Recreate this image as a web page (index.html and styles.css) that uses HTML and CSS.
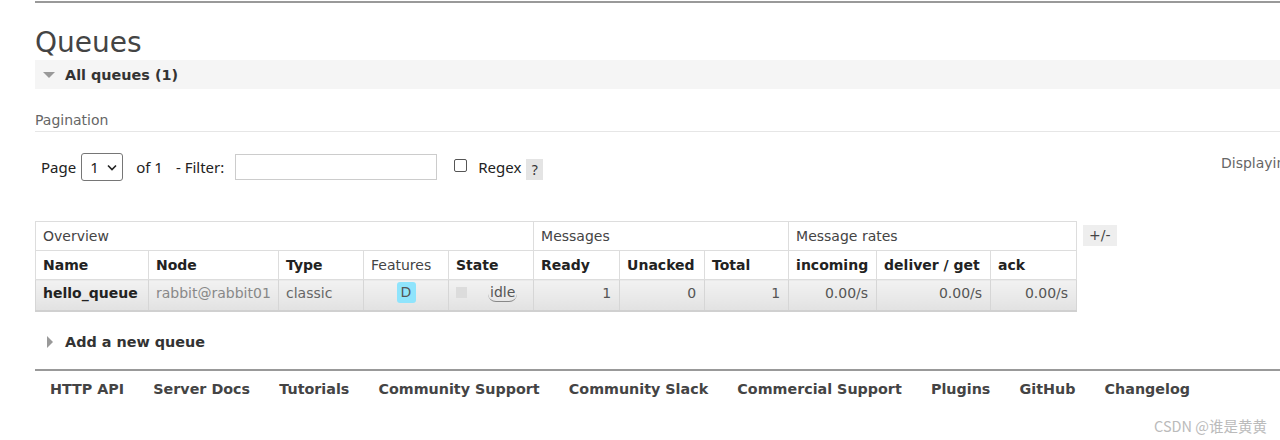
FILE: index.html
```html
<!DOCTYPE html>
<html lang="en">
<head>
    <meta charset="UTF-8">
    <title>RabbitMQ Management - Queues</title>
    <link rel="stylesheet" href="styles.css">
</head>
<body>
    <div class="main">
        <div class="top-rule"></div>
        <h1>Queues</h1>
        <div class="section-head">
            <span class="arrow-down"></span>
            <h2>All queues (1)</h2>
        </div>

        <div class="pagination-label">Pagination</div>
        <div class="pager">
            <div class="pager-left">
                <span>Page</span>
                <span class="select">1 <svg width="10" height="7" viewBox="0 0 10 7"><path d="M1 1.5 L5 5.5 L9 1.5" fill="none" stroke="#222" stroke-width="1.6"/></svg></span>
                <span class="of">of 1</span>
                <span>- Filter:</span>
                <span class="filter"></span>
                <span class="checkbox"></span>
                <span>Regex</span>
                <span class="help">?</span>
            </div>
            <div class="pager-right">Displaying 1 item , page size up to: <span class="page-size">100</span></div>
        </div>

        <div class="table-row">
            <table class="list">
                <colgroup>
                    <col class="c-name"><col class="c-node"><col class="c-type"><col class="c-feat"><col class="c-state">
                    <col class="c-ready"><col class="c-unacked"><col class="c-total">
                    <col class="c-in"><col class="c-deliver"><col class="c-ack">
                </colgroup>
                <thead>
                    <tr class="group">
                        <th colspan="5">Overview</th>
                        <th colspan="3">Messages</th>
                        <th colspan="3">Message rates</th>
                    </tr>
                    <tr class="cols">
                        <th>Name</th>
                        <th>Node</th>
                        <th>Type</th>
                        <th class="plain">Features</th>
                        <th>State</th>
                        <th>Ready</th>
                        <th>Unacked</th>
                        <th>Total</th>
                        <th>incoming</th>
                        <th>deliver / get</th>
                        <th>ack</th>
                    </tr>
                </thead>
                <tbody>
                    <tr>
                        <td class="qname">hello_queue</td>
                        <td class="node">rabbit@rabbit01</td>
                        <td class="qtype">classic</td>
                        <td class="center"><span class="badge">D</span></td>
                        <td><span class="state"><span class="dot"></span><span class="idle">idle</span></span></td>
                        <td class="num">1</td>
                        <td class="num">0</td>
                        <td class="num">1</td>
                        <td class="num">0.00/s</td>
                        <td class="num">0.00/s</td>
                        <td class="num">0.00/s</td>
                    </tr>
                </tbody>
            </table>
            <span class="toggle">+/-</span>
        </div>

        <div class="section-closed">
            <span class="arrow-right"></span>
            <h2>Add a new queue</h2>
        </div>

        <div class="footer">
            <a href="#">HTTP API</a>
            <a href="#">Server Docs</a>
            <a href="#">Tutorials</a>
            <a href="#">Community Support</a>
            <a href="#">Community Slack</a>
            <a href="#">Commercial Support</a>
            <a href="#">Plugins</a>
            <a href="#">GitHub</a>
            <a href="#">Changelog</a>
        </div>
    </div>
    <div class="watermark">CSDN @谁是黄黄</div>
</body>
</html>
```

FILE: styles.css
```css
* {
    box-sizing: border-box;
    margin: 0;
    padding: 0;
}

body {
    font-family: "DejaVu Sans", Verdana, sans-serif;
    font-size: 14px;
    color: #444;
    background: #fff;
    overflow: hidden;
    width: 1280px;
    height: 440px;
}

.main {
    padding-left: 35px;
}

.top-rule {
    border-top: 2px solid #999;
    margin-top: 1px;
}

h1 {
    font-size: 28px;
    font-weight: normal;
    line-height: 34px;
    margin-top: 23px;
    color: #444;
}

.section-head {
    display: flex;
    align-items: center;
    height: 29px;
    background: #f5f5f5;
}

h2 {
    font-size: 14.4px;
    font-weight: bold;
    color: #333;
}

.arrow-down {
    width: 0;
    height: 0;
    border-left: 6px solid transparent;
    border-right: 6px solid transparent;
    border-top: 6px solid #999;
    margin: 0 10px 0 8px;
}

.pagination-label {
    margin-top: 23px;
    color: #666;
    line-height: 16px;
    padding-bottom: 3px;
    border-bottom: 1px solid #e6e6e6;
}

.pager {
    display: grid;
    grid-template-columns: 1186px auto;
    align-items: center;
    height: 28px;
    margin-top: 21px;
    white-space: nowrap;
    font-family: "Noto Sans", "Open Sans", sans-serif;
    font-size: 15px;
    color: #222;
}

.pager-left {
    display: flex;
    align-items: center;
    padding-left: 6px;
}

.select {
    display: inline-flex;
    align-items: center;
    gap: 8px;
    width: 42px;
    height: 28px;
    margin-left: 5px;
    padding-left: 8px;
    border: 1px solid #767676;
    border-radius: 3px;
    font-size: 15px;
}

.of {
    margin-left: 13px;
    margin-right: 13px;
}

.filter {
    width: 202px;
    height: 26px;
    margin-left: 11px;
    border: 1px solid #ccc;
}

.checkbox {
    width: 13px;
    height: 13px;
    margin-left: 17px;
    margin-right: 11px;
    margin-top: -4px;
    border: 1px solid #555;
    border-radius: 2px;
}

.help {
    margin-left: 5px;
    margin-top: 4px;
    width: 17px;
    height: 21px;
    background: #e4e4e4;
    text-align: center;
    line-height: 21px;
    color: #333;
    font-size: 14px;
}

.pager-right {
    color: #666;
    margin-top: -8px;
    font-family: "DejaVu Sans", Verdana, sans-serif;
    font-size: 14px;
}

.table-row {
    display: flex;
    align-items: flex-start;
    margin-top: 40px;
}

table.list {
    border-collapse: collapse;
    table-layout: fixed;
    width: 1041px;
}

.c-name { width: 113px; }
.c-node { width: 130px; }
.c-type { width: 85px; }
.c-feat { width: 85px; }
.c-state { width: 85px; }
.c-ready { width: 86px; }
.c-unacked { width: 85px; }
.c-total { width: 84px; }
.c-in { width: 88px; }
.c-deliver { width: 114px; }
.c-ack { width: 86px; }

table.list th,
table.list td {
    border: 1px solid #ddd;
    padding: 0 7px;
    text-align: left;
    white-space: nowrap;
    overflow: hidden;
}

table.list tr.group th {
    height: 29px;
    font-weight: normal;
    color: #444;
}

table.list tr.cols th {
    height: 29px;
    font-weight: bold;
    color: #222;
}

table.list tr.cols th.plain {
    font-weight: normal;
    color: #444;
}

table.list tbody td {
    height: 31px;
    padding-bottom: 4px;
    background: linear-gradient(#f2f2f2, #e2e2e2);
    border-color: #d6d6d6;
    border-bottom: 2px solid #d0d0d0;
    color: #555;
}

table.list td.qname {
    font-weight: bold;
    color: #222;
}

table.list td.node {
    color: #888;
}

table.list td.qtype {
    color: #666;
}

table.list td.center {
    text-align: center;
}

table.list td.num {
    text-align: right;
    padding-right: 8px;
}

.badge {
    display: inline-block;
    width: 19px;
    height: 21px;
    line-height: 21px;
    text-align: center;
    background: #8fe4fc;
    border-radius: 3px;
    color: #555;
}

.state {
    display: flex;
    align-items: center;
}

.dot {
    width: 11px;
    height: 11px;
    background: #dcdcdc;
}

.idle {
    margin-left: 21px;
    padding: 0 2px;
    border-bottom: 1px solid #888;
    border-radius: 0 0 8px 8px;
    line-height: 17px;
}

.toggle {
    margin-left: 6px;
    margin-top: 4px;
    padding: 0 6px;
    height: 21px;
    line-height: 21px;
    background: #eee;
    color: #444;
}

.section-closed {
    display: flex;
    align-items: center;
    margin-top: 20px;
    height: 20px;
}

.arrow-right {
    width: 0;
    height: 0;
    border-top: 6px solid transparent;
    border-bottom: 6px solid transparent;
    border-left: 6px solid #999;
    margin: 0 12px 0 12px;
}

.footer {
    display: flex;
    gap: 29.2px;
    margin-top: 17px;
    padding: 10px 0 0 15px;
    border-top: 2px solid #999;
}

.footer a {
    font-size: 14.3px;
    font-weight: bold;
    color: #444;
    text-decoration: none;
}

.watermark {
    position: absolute;
    right: 13px;
    top: 415px;
    font-family: "Noto Sans CJK SC", sans-serif;
    font-size: 14.5px;
    color: #bbb;
}
```
